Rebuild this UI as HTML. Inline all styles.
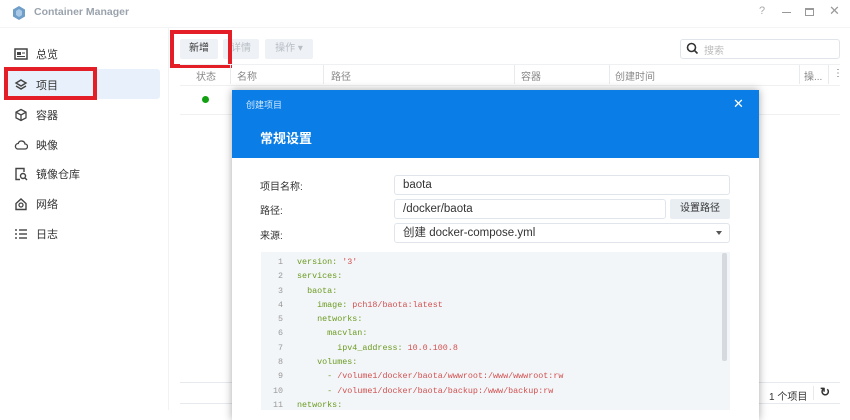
<!DOCTYPE html>
<html><head><meta charset="utf-8"><style>
*{box-sizing:border-box;margin:0;padding:0}
body{width:850px;height:410px;overflow:hidden;background:#fff;font-family:"Liberation Sans","Noto Sans CJK SC",sans-serif;font-size:11px;color:#333;position:relative}
.abs{position:absolute}
.title{left:34px;top:6px;color:#9aa3ad;font-weight:bold;font-size:10.5px}
.nav{left:14px;font-size:11px;color:#333;display:flex;align-items:center}
.nav svg{margin-right:8px}
.btn{background:#eef1f5;border-radius:2px;height:20px;line-height:20px;text-align:center;font-size:10px;color:#b8bec6}
.hdr{top:68px;font-size:10px;color:#888}
.vl{top:65px;width:1px;height:19px;background:#e8ebee}
.field{background:#fff;border:1px solid #dfe5eb;border-radius:3px;height:20px;line-height:18px;padding-left:8px;font-size:11.5px;color:#333}
.lbl{font-size:10px;color:#333;left:260px}
.code{font-family:"Liberation Mono",monospace;font-size:8.4px;line-height:14.3px;white-space:pre}
.k{color:#6a9a1f}.s{color:#d0504f}.n{color:#999;display:inline-block;width:20px;text-align:right;margin-right:14px}
</style></head><body>
<svg class="abs" style="left:11px;top:5px" width="16" height="16" viewBox="0 0 16 16"><polygon points="8,1 14,4.5 14,11.5 8,15 2,11.5 2,4.5" fill="#6f9ec9"/><polygon points="8,4 11,6 11,10 8,12 5,10 5,6" fill="#a9c9e6"/></svg>
<div class="abs title">Container Manager</div>
<div class="abs" style="left:759px;top:5px;color:#aaa;font-size:11px">?</div>
<div class="abs" style="left:782px;top:12px;width:9px;height:1px;background:#999"></div>
<div class="abs" style="left:805px;top:8px;width:9px;height:8px;border:1px solid #999;border-top-width:2px"></div>
<div class="abs" style="left:829px;top:3px;color:#999;font-size:13px">✕</div>
<div class="abs" style="left:0;top:27px;width:850px;height:1px;background:#f2f4f6"></div>
<div class="abs" style="left:4px;top:69px;width:156px;height:30px;background:#e8f1fb;border-radius:3px"></div>
<div class="abs nav" style="top:46px"><svg width="14" height="12" viewBox="0 0 14 12"><rect x="1" y="1" width="12" height="10" fill="none" stroke="#444" stroke-width="1.5"/><rect x="3" y="4" width="4" height="3" fill="#444"/><line x1="8" y1="5" x2="11" y2="5" stroke="#444"/><line x1="3" y1="8.5" x2="11" y2="8.5" stroke="#444"/></svg>总览</div>
<div class="abs nav" style="top:77px"><svg width="14" height="14" viewBox="0 0 14 14"><path d="M7 2L12 5 7 8 2 5Z M2 8L7 11 12 8" fill="none" stroke="#444" stroke-width="1.4"/></svg>项目</div>
<div class="abs nav" style="top:107px"><svg width="14" height="14" viewBox="0 0 14 14"><path d="M7 1.5L12 4.2V9.8L7 12.5 2 9.8V4.2Z M2 4.2L7 7 12 4.2 M7 7V12.5" fill="none" stroke="#444" stroke-width="1.3"/></svg>容器</div>
<div class="abs nav" style="top:137px"><svg width="14" height="12" viewBox="0 0 14 12"><path d="M3.5 10H11a2.5 2.5 0 0 0 0-5 3.5 3.5 0 0 0-6.8-.5A2.8 2.8 0 0 0 3.5 10Z" fill="none" stroke="#444" stroke-width="1.3"/></svg>映像</div>
<div class="abs nav" style="top:166px"><svg width="14" height="14" viewBox="0 0 14 14"><path d="M6 12.5H2V1.5H10V5" fill="none" stroke="#444" stroke-width="1.4"/><circle cx="9" cy="9" r="2.5" fill="none" stroke="#444" stroke-width="1.4"/><line x1="11" y1="11" x2="13" y2="13" stroke="#444" stroke-width="1.4"/></svg>镜像仓库</div>
<div class="abs nav" style="top:196px"><svg width="14" height="14" viewBox="0 0 14 14"><path d="M2 6.5L7 2 12 6.5V12.5H2Z" fill="none" stroke="#444" stroke-width="1.4"/><circle cx="7" cy="8" r="2" fill="none" stroke="#444" stroke-width="1.3"/></svg>网络</div>
<div class="abs nav" style="top:226px"><svg width="14" height="12" viewBox="0 0 14 12"><g stroke="#444" stroke-width="1.4"><line x1="1" y1="2" x2="3" y2="2"/><line x1="5" y1="2" x2="13" y2="2"/><line x1="1" y1="6" x2="3" y2="6"/><line x1="5" y1="6" x2="13" y2="6"/><line x1="1" y1="10" x2="3" y2="10"/><line x1="5" y1="10" x2="13" y2="10"/></g></svg>日志</div>
<div class="abs" style="left:4px;top:67px;width:93px;height:33px;border:4px solid #e41e26"></div>
<div class="abs" style="left:168px;top:28px;width:1px;height:382px;background:#f0f2f4"></div>
<div class="abs btn" style="left:180px;top:39px;width:38px;color:#333">新增</div>
<div class="abs btn" style="left:223px;top:39px;width:36px">详情</div>
<div class="abs btn" style="left:265px;top:39px;width:48px">操作 ▾</div>
<div class="abs" style="left:170px;top:30px;width:62px;height:38px;border:4px solid #e41e26"></div>
<div class="abs" style="left:680px;top:39px;width:160px;height:20px;border:1px solid #dfe5eb;border-radius:3px"></div>
<svg class="abs" style="left:686px;top:42px" width="13" height="13" viewBox="0 0 13 13"><circle cx="5.5" cy="5.5" r="4" fill="none" stroke="#333" stroke-width="1.6"/><line x1="8.5" y1="8.5" x2="11.5" y2="11.5" stroke="#333" stroke-width="1.6"/></svg>
<div class="abs" style="left:704px;top:42px;color:#bbb;font-size:10px">搜索</div>
<div class="abs" style="left:180px;top:64px;width:660px;height:1px;background:#eef0f2"></div>
<div class="abs hdr" style="left:196px">状态</div><div class="abs vl" style="left:230px"></div>
<div class="abs hdr" style="left:237px">名称</div><div class="abs vl" style="left:323px"></div>
<div class="abs hdr" style="left:331px">路径</div><div class="abs vl" style="left:514px"></div>
<div class="abs hdr" style="left:521px">容器</div><div class="abs vl" style="left:609px"></div>
<div class="abs hdr" style="left:615px">创建时间</div><div class="abs vl" style="left:799px"></div>
<div class="abs hdr" style="left:804px">操...</div><div class="abs vl" style="left:828px"></div>
<div class="abs hdr" style="left:833px;color:#666">⋮</div>
<div class="abs" style="left:180px;top:85px;width:660px;height:1px;background:#eef0f2"></div>
<div class="abs" style="left:202px;top:96px;width:7px;height:7px;border-radius:50%;background:#12a012"></div>
<div class="abs" style="left:180px;top:114px;width:660px;height:1px;background:#eef0f2"></div>
<div class="abs" style="left:180px;top:382px;width:660px;height:1px;background:#e6eaee"></div>
<div class="abs" style="left:180px;top:403px;width:660px;height:1px;background:#e6eaee"></div>
<div class="abs" style="left:769px;top:388px;font-size:10px;color:#333">1 个项目</div>
<div class="abs" style="left:813px;top:386px;width:1px;height:14px;background:#e6eaee"></div>
<div class="abs" style="left:820px;top:385px;font-size:12px;color:#333;font-weight:bold">↻</div>
<div class="abs" style="left:232px;top:90px;width:527px;height:330px;background:#fff;box-shadow:0 0 8px rgba(0,0,0,.35)"></div>
<div class="abs" style="left:232px;top:90px;width:527px;height:68px;background:#0a7ee6"></div>
<div class="abs" style="left:246px;top:98px;color:#d6eaff;font-size:9px">创建项目</div>
<div class="abs" style="left:733px;top:96px;color:#fff;font-size:13px">✕</div>
<div class="abs" style="left:260px;top:128px;color:#fff;font-size:13px;font-weight:bold">常规设置</div>
<div class="abs lbl" style="top:178px">项目名称:</div>
<div class="abs lbl" style="top:202px">路径:</div>
<div class="abs lbl" style="top:227px">来源:</div>
<div class="abs field" style="left:394px;top:175px;width:336px">baota</div>
<div class="abs field" style="left:394px;top:199px;width:272px">/docker/baota</div>
<div class="abs" style="left:670px;top:199px;width:60px;height:20px;background:#e9eef3;border-radius:2px;text-align:center;line-height:20px;font-size:10px;color:#333">设置路径</div>
<div class="abs field" style="left:394px;top:223px;width:336px">创建 docker-compose.yml</div>
<div class="abs" style="left:716px;top:231px;border-left:3px solid transparent;border-right:3px solid transparent;border-top:4px solid #555"></div>
<div class="abs" style="left:261px;top:252px;width:469px;height:158px;background:#f3f6f9"></div>
<div class="abs" style="left:722px;top:253px;width:5px;height:108px;background:#d6dade;border-radius:2px"></div>
<div class="abs code" style="left:263px;top:255px"><span class="n">1</span><span class="k">version:</span> <span class="s">'3'</span>
<span class="n">2</span><span class="k">services:</span>
<span class="n">3</span>  <span class="k">baota:</span>
<span class="n">4</span>    <span class="k">image:</span> <span class="s">pch18/baota:latest</span>
<span class="n">5</span>    <span class="k">networks:</span>
<span class="n">6</span>      <span class="k">macvlan:</span>
<span class="n">7</span>        <span class="k">ipv4_address:</span> <span class="s">10.0.100.8</span>
<span class="n">8</span>    <span class="k">volumes:</span>
<span class="n">9</span>      <span class="k">-</span> <span class="s">/volume1/docker/baota/wwwroot:/www/wwwroot:rw</span>
<span class="n">10</span>      <span class="k">-</span> <span class="s">/volume1/docker/baota/backup:/www/backup:rw</span>
<span class="n">11</span><span class="k">networks:</span></div>
</body></html>
